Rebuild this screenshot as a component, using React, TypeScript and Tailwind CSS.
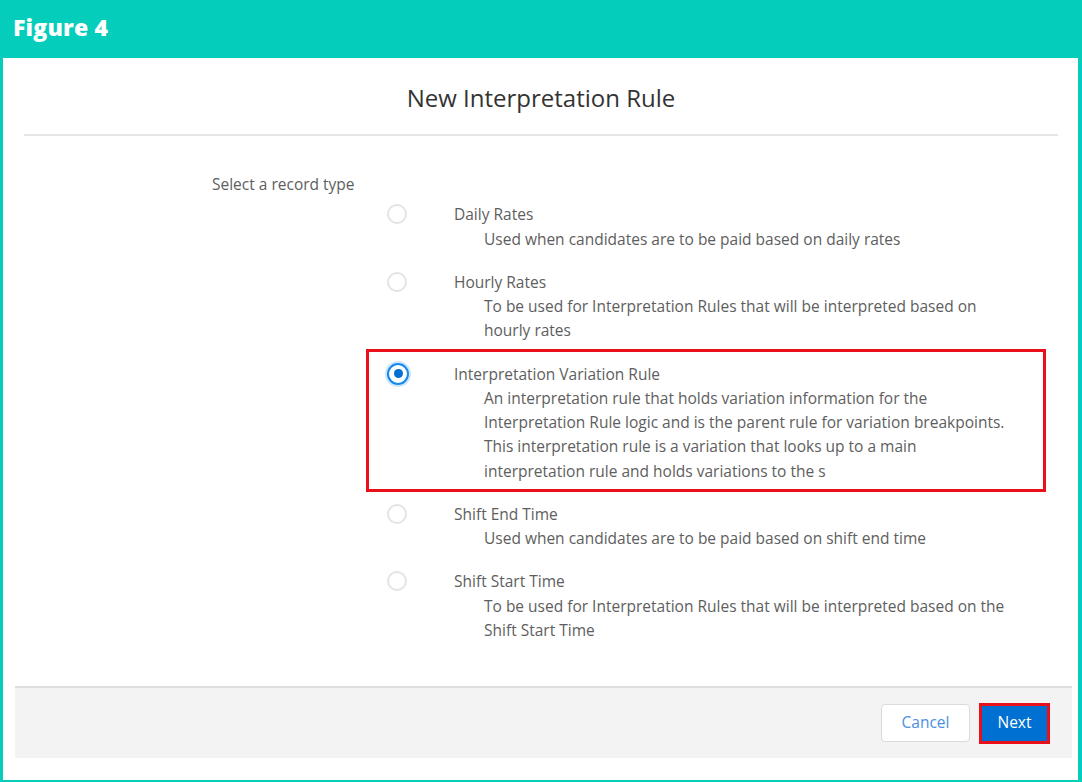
import { useState } from "react";

const recordTypes = [
  {
    id: "daily",
    label: "Daily Rates",
    description: "Used when candidates are to be paid based on daily rates",
  },
  {
    id: "hourly",
    label: "Hourly Rates",
    description: "To be used for Interpretation Rules that will be interpreted based on hourly rates",
  },
  {
    id: "variation",
    label: "Interpretation Variation Rule",
    description:
      "An interpretation rule that holds variation information for the Interpretation Rule logic and is the parent rule for variation breakpoints. This interpretation rule is a variation that looks up to a main interpretation rule and holds variations to the s",
  },
  {
    id: "shiftEnd",
    label: "Shift End Time",
    description: "Used when candidates are to be paid based on shift end time",
  },
  {
    id: "shiftStart",
    label: "Shift Start Time",
    description: "To be used for Interpretation Rules that will be interpreted based on the Shift Start Time",
  },
];

const Radio = ({ checked }: { checked: boolean }) =>
  checked ? (
    <span className="mt-[1px] flex h-[22px] w-[22px] shrink-0 items-center justify-center rounded-full border-2 border-[#1589ee] bg-white shadow-[0_0_0_2px_#cfe6fb]">
      <span className="h-[9px] w-[9px] rounded-full bg-[#0070d2]" />
    </span>
  ) : (
    <span className="mt-[2px] h-[20px] w-[20px] shrink-0 rounded-full border-2 border-[#e4e4e4] bg-white" />
  );

export default function App() {
  const [selected, setSelected] = useState("variation");

  return (
    <div className="flex h-[782px] w-[1082px] flex-col bg-[#05cdbb] font-['Open_Sans',sans-serif]">
      <div className="flex h-[58px] shrink-0 items-center px-[13px] pb-[4px]">
        <span className="text-[23px] font-extrabold tracking-[0.2px] text-white">Figure 4</span>
      </div>

      <div className="mb-[2px] ml-[3px] mr-[4px] flex flex-1 flex-col bg-white">
        {/* modal header */}
        <div className="ml-[21px] mr-[20px] flex h-[78px] shrink-0 items-center justify-center border-b-2 border-[#e6e6e6] pt-[4px]">
          <h1 className="text-[24px] text-[#333333]">New Interpretation Rule</h1>
        </div>

        {/* record types */}
        <div className="flex-1 pl-[209px] pt-[36px] text-[15.5px] leading-[24.25px] text-[#5e5e5e]">
          <p>Select a record type</p>
          <div className="ml-[175px] mt-[6px] flex w-[659px] flex-col gap-[19px]">
            {recordTypes.map((t) => {
              const isSel = t.id === selected;
              return (
                <label key={t.id} className="relative flex cursor-pointer" onClick={() => setSelected(t.id)}>
                  {isSel && (
                    <span className="pointer-events-none absolute -bottom-[9px] -left-[21px] -top-[13px] right-0 border-[3px] border-[#e8101b]" />
                  )}
                  <Radio checked={isSel} />
                  <div className={isSel ? "ml-[45px]" : "ml-[47px]"}>
                    <div>{t.label}</div>
                    <div className="w-[564px] pl-[30px]">{t.description}</div>
                  </div>
                </label>
              );
            })}
          </div>
        </div>

        {/* footer */}
        <div className="mb-[22px] ml-[12px] mr-[6px] flex h-[72px] shrink-0 items-center justify-end gap-[9px] border-t-2 border-[#dedede] bg-[#f3f3f3] pr-[22px]">
          <button className="h-[38px] w-[89px] rounded-[4px] border border-[#dddbda] bg-white text-[15.5px] text-[#4a90e2]">
            Cancel
          </button>
          <div className="border-[3px] border-[#e8101b]">
            <button className="h-[35px] w-[65px] bg-[#0070d2] text-[15.5px] text-white">Next</button>
          </div>
        </div>
      </div>
    </div>
  );
}
